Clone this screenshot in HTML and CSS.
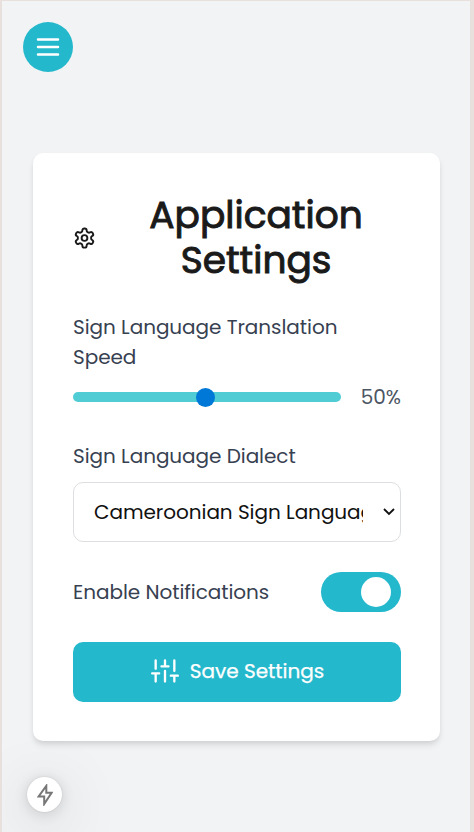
FILE: index.html
```html
<!DOCTYPE html>
<html lang="en">
<head>
<meta charset="utf-8">
<title>Application Settings</title>
<link rel="stylesheet" href="styles.css">
</head>
<body>
<div class="page">
  <header class="topbar">
    <button class="menu" aria-label="Menu">
      <svg width="30" height="30" viewBox="0 0 24 24"><path d="M4 6h16M4 12h16M4 18h16"/></svg>
    </button>
  </header>
  <main class="card">
    <div class="heading">
      <svg class="gear" viewBox="0 0 24 24"><path d="M12.22 2h-.44a2 2 0 0 0-2 2v.18a2 2 0 0 1-1 1.73l-.43.25a2 2 0 0 1-2 0l-.15-.08a2 2 0 0 0-2.73.73l-.22.38a2 2 0 0 0 .73 2.73l.15.1a2 2 0 0 1 1 1.72v.51a2 2 0 0 1-1 1.74l-.15.09a2 2 0 0 0-.73 2.73l.22.38a2 2 0 0 0 2.73.73l.15-.08a2 2 0 0 1 2 0l.43.25a2 2 0 0 1 1 1.73V20a2 2 0 0 0 2 2h.44a2 2 0 0 0 2-2v-.18a2 2 0 0 1 1-1.73l.43-.25a2 2 0 0 1 2 0l.15.08a2 2 0 0 0 2.73-.73l.22-.39a2 2 0 0 0-.73-2.73l-.15-.08a2 2 0 0 1-1-1.74v-.5a2 2 0 0 1 1-1.74l.15-.09a2 2 0 0 0 .73-2.73l-.22-.38a2 2 0 0 0-2.73-.73l-.15.08a2 2 0 0 1-2 0l-.43-.25a2 2 0 0 1-1-1.73V4a2 2 0 0 0-2-2z"/><circle cx="12" cy="12" r="3"/></svg>
      <h1>
        <span>Application</span>
        <span>Settings</span>
      </h1>
    </div>
    <section class="speed">
      <div class="label">Sign Language Translation<br>Speed</div>
      <div class="slider-row">
        <div class="track"><span class="thumb"></span></div>
        <span class="percent">50%</span>
      </div>
    </section>
    <section class="dialect">
      <div class="label">Sign Language Dialect</div>
      <div class="select">
        <span class="value">Cameroonian Sign Language</span>
        <svg width="12" height="8" viewBox="0 0 12 8"><path d="M1 1l5 5 5-5"/></svg>
      </div>
    </section>
    <section class="notify">
      <span class="label">Enable Notifications</span>
      <span class="toggle"><span class="knob"></span></span>
    </section>
    <button class="save">
      <svg width="28" height="30" viewBox="0 0 24 24"><path d="M4 21v-7M4 10V3M12 21v-9M12 8V3M20 21v-5M20 12V3M1 14h6M9 8h6M17 16h6"/></svg>
      <span>Save Settings</span>
    </button>
  </main>
  <div class="bolt">
    <svg width="16" height="22" viewBox="0 0 16 22"><path d="M9.3 1.8L1.6 12.4H7.2V20L14.6 8.7H9.3Z"/></svg>
  </div>
</div>
</body>
</html>
```
FILE: styles.css
```css
* { box-sizing: border-box; }
body {
  margin: 0;
  font-family: Poppins, Inter, "Liberation Sans", sans-serif;
  font-size: 20px;
  line-height: 30px;
}
button { border: 0; padding: 0; font: inherit; }
svg {
  display: block;
  fill: none;
  stroke: currentColor;
  stroke-width: 2;
  stroke-linecap: round;
  stroke-linejoin: round;
}
.page {
  position: relative;
  height: 832px;
  overflow: hidden;
  background: #f2f3f5;
  border: solid #e7e0dd;
  border-width: 1px 4px 0 2px;
  padding: 21px 29.6px 0 31px;
}
.topbar { height: 131px; margin-left: -10px; }
.menu {
  width: 50px;
  height: 50px;
  border-radius: 50%;
  display: flex;
  align-items: center;
  justify-content: center;
  background: #24b8cc;
  color: #fff;
}
.card {
  height: 588.4px;
  padding: 40px 39.4px 40px 40px;
  border-radius: 10px;
  background: #fff;
  box-shadow: 0 5px 7px -1px rgba(0,0,0,.1), 0 2px 5px -1px rgba(0,0,0,.07);
}
.heading { display: flex; align-items: center; height: 90px; }
.gear { width: 23px; height: 30px; flex: none; margin-right: 15px; color: #1a1a1a; }
h1 {
  flex: 1;
  display: flex;
  flex-direction: column;
  align-items: center;
  margin: 0;
  white-space: nowrap;
  font-size: 37.5px;
  line-height: 45px;
  font-weight: 400;
  color: #1a1a1a;
  -webkit-text-stroke: 1px #1a1a1a;
}
.label { color: #374151; white-space: nowrap; letter-spacing: -.05px; }
.speed { margin-top: 29px; }
.slider-row { display: flex; align-items: center; height: 30px; margin-top: 10px; }
.track {
  position: relative;
  width: 268px;
  height: 10px;
  border-radius: 5px;
  background: #50cdd4;
}
.thumb {
  position: absolute;
  left: 123px;
  top: -4.5px;
  width: 19px;
  height: 19px;
  border-radius: 50%;
  background: #0078d7;
}
.percent { margin-left: 20px; color: #4b5563; white-space: nowrap; }
.dialect { margin-top: 29px; }
.select {
  display: flex;
  align-items: center;
  justify-content: space-between;
  height: 60px;
  margin-top: 11px;
  padding: 0 5px 1px 20px;
  border: 1px solid #dcdee1;
  border-radius: 10px;
  color: #111;
}
.select svg { stroke-width: 1.8; stroke-linecap: butt; stroke-linejoin: miter; }
.value { width: 269px; overflow: hidden; white-space: nowrap; letter-spacing: -.04px; }
.notify { display: flex; align-items: center; justify-content: space-between; margin-top: 30px; }
.toggle {
  display: flex;
  justify-content: flex-end;
  width: 80px;
  height: 40px;
  padding: 5px 10px;
  border-radius: 20px;
  background: #24b8cc;
}
.knob { width: 30px; height: 30px; border-radius: 50%; background: #fff; }
.save {
  display: flex;
  align-items: center;
  justify-content: center;
  gap: 11px;
  width: 100%;
  height: 60px;
  padding: 0 0 2px 1px;
  margin-top: 30px;
  border-radius: 10px;
  background: #24b8cc;
  color: #fff;
  white-space: nowrap;
  -webkit-text-stroke: .25px #fff;
}
.bolt {
  position: absolute;
  left: 25px;
  top: 776px;
  width: 35px;
  height: 35px;
  border-radius: 50%;
  display: flex;
  align-items: center;
  justify-content: center;
  background: #fff;
  color: #777;
  box-shadow: 0 0 2px rgba(0,0,0,.12), 0 2px 14px rgba(0,0,0,.14), 0 12px 60px 8px rgba(0,0,0,.1);
}
.bolt svg { stroke-width: 2; stroke-linejoin: miter; }
```
